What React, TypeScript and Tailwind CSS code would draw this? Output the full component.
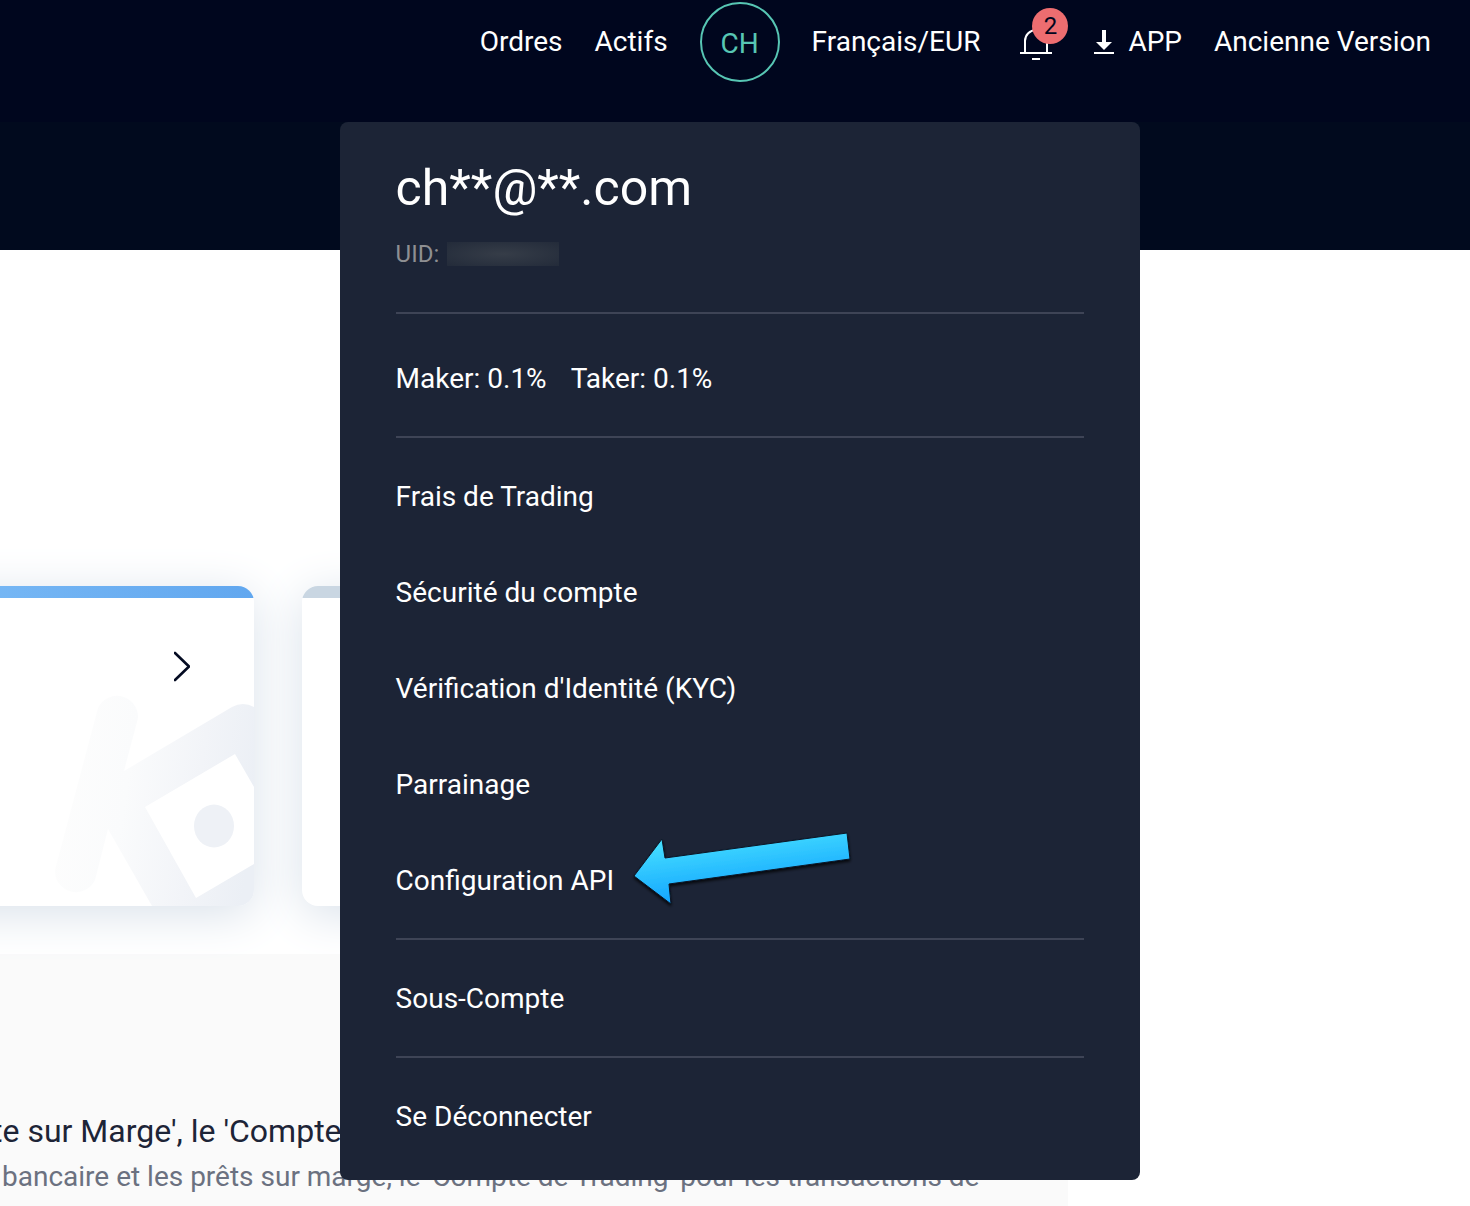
import type { ReactNode } from "react";

const accountLinks = [
  "Frais de Trading",
  "Sécurité du compte",
  "Vérification d'Identité (KYC)",
  "Parrainage",
];

function Arrow() {
  return (
    <svg
      className="pointer-events-none absolute -top-1 left-[232px] h-[84px] w-[228px]"
      viewBox="628 828 228 84"
      aria-hidden="true"
    >
      <defs>
        <linearGradient id="arrow" gradientUnits="userSpaceOnUse" x1="742" y1="835" x2="750" y2="898">
          <stop offset="0" stopColor="#43dcff" />
          <stop offset="1" stopColor="#0fa0ff" />
        </linearGradient>
        <filter id="arrowShadow" x="-10%" y="-20%" width="120%" height="150%">
          <feDropShadow dx="0" dy="2" stdDeviation="1.5" floodColor="#000" floodOpacity="0.8" />
        </filter>
      </defs>
      <path
        d="M634 876 662 839 665 858 847 833 850 859 669 884 671 904Z"
        fill="url(#arrow)"
        stroke="#0b1626"
        strokeWidth="1"
        filter="url(#arrowShadow)"
      />
    </svg>
  );
}

function WalletArt() {
  return (
    <svg
      className="absolute bottom-0 right-0 h-[308px] w-[254px]"
      viewBox="0 598 254 308"
      aria-hidden="true"
    >
      <defs>
        <linearGradient id="wallet" gradientUnits="userSpaceOnUse" x1="55" y1="790" x2="254" y2="820">
          <stop offset="0" stopColor="#fdfdfd" />
          <stop offset="0.35" stopColor="#fafbfc" />
          <stop offset="0.7" stopColor="#f2f4f8" />
          <stop offset="1" stopColor="#ebeff5" />
        </linearGradient>
      </defs>
      <path
        d="M98 708A21 21 0 0 1 138 718L124 771 232 707Q243 701 254 707V906H152L108 829 95 880A21 21 0 0 1 55 870Z"
        fill="url(#wallet)"
      />
      <path d="M145 807 235 754 254 787V864L196 898Z" fill="#fff" />
      <ellipse cx="214" cy="826" rx="20" ry="21.5" fill="#eef1f6" />
    </svg>
  );
}

function MenuItem({ label, children }: { label: string; children?: ReactNode }) {
  return (
    <li className="relative flex h-24 items-center pt-[2px]">
      <a href="#">{label}</a>
      {children}
    </li>
  );
}

function AccountMenu() {
  return (
    <div className="absolute left-1/2 top-[120px] z-10 w-[800px] -translate-x-1/2 rounded-lg bg-[#1c2436] px-14 pb-4 text-[28px] text-white">
      <div className="h-[190px] pt-9">
        <p className="text-[50px] leading-[60px]">ch**@**.com</p>
        <p className="mt-5 flex items-center gap-2 text-2xl leading-8 text-[#8e8f92]">
          UID:
          <span className="h-6 w-28 bg-radial from-[#363d48] to-[#232b3a]" />
        </p>
      </div>
      <div className="border-y-2 border-[#3e4456] pb-[10px] pt-4">
        <p className="flex h-24 items-center gap-6 pt-[2px]">
          <span>Maker: 0.1%</span>
          <span>Taker: 0.1%</span>
        </p>
      </div>
      <ul className="border-b-2 border-[#3e4456] py-[10px]">
        {accountLinks.map((label) => (
          <MenuItem key={label} label={label} />
        ))}
        <MenuItem label="Configuration API">
          <Arrow />
        </MenuItem>
      </ul>
      <ul className="border-b-2 border-[#3e4456] py-[10px]">
        <MenuItem label="Sous-Compte" />
      </ul>
      <div className="mt-[10px] flex h-24 items-center pt-[2px]">
        <button type="button">Se Déconnecter</button>
      </div>
    </div>
  );
}

function Header() {
  return (
    <header className="h-[250px] bg-[linear-gradient(#00061e_122px,#010a1e_122px)] pr-[39px] pt-[2px] text-[28px] text-white">
      <nav className="flex h-20 items-center justify-end gap-8 whitespace-nowrap">
        <a href="#">Ordres</a>
        <a href="#">Actifs</a>
        <div className="relative">
          <button
            type="button"
            className="flex size-20 items-center justify-center rounded-full border-2 border-[#57c6b4] pt-1 text-[#57c6b4]"
          >
            CH
          </button>
          <AccountMenu />
        </div>
        <button type="button">Français/EUR</button>
        <button type="button" aria-label="Notifications" className="relative ml-2 h-14 w-[42px]">
          <svg className="absolute left-0 top-3 h-10 w-8" viewBox="0 0 32 40" fill="none" stroke="#fff" strokeWidth="2" aria-hidden="true">
            <path d="M5 27V15a11 11 0 0 1 22 0v12M0 27h32M12 33h8" />
          </svg>
          <span className="absolute -top-[6px] left-3 flex size-9 items-center justify-center rounded-full bg-[#ed6d70] text-2xl text-[#00061e]">
            2
          </span>
        </button>
        <a href="#" className="flex items-center gap-[14px]">
          <svg className="h-6 w-5" viewBox="0 0 20 24" fill="#fff" aria-hidden="true">
            <path d="M8 0h4v12h6l-8 8-8-8h6zM0 22h20v2H0z" />
          </svg>
          APP
        </a>
        <a href="#">Ancienne Version</a>
      </nav>
    </header>
  );
}

export default function App() {
  return (
    <div className="flex min-h-screen flex-col overflow-hidden bg-white font-[Roboto,sans-serif]">
      <Header />
      <main className="flex flex-1 flex-col">
        <section className="flex gap-12 pb-12 pt-[336px]">
          <article className="relative -ml-[302px] h-80 w-[556px] shrink-0 rounded-2xl bg-white shadow-[0_8px_48px_#d9e1ea]">
            <div className="relative h-full overflow-hidden rounded-2xl">
              <div className="h-3 bg-linear-to-r from-[#8cc8fa] to-[#61a7ef]" />
              <WalletArt />
            </div>
            <button type="button" aria-label="Suivant" className="absolute right-16 top-16 h-8 w-4">
              <svg className="h-8 w-4" viewBox="0 0 16 32" fill="none" stroke="#040b22" strokeWidth="2.6" strokeLinecap="round" strokeLinejoin="round" aria-hidden="true">
                <path d="m1 3 14 13.500-14 13.500" />
              </svg>
            </button>
          </article>
          <article className="h-80 w-[556px] overflow-hidden rounded-2xl bg-white shadow-[0_8px_48px_#d9e1ea]">
            <div className="h-3 bg-[#c9d6e2]" />
          </article>
        </section>
        <section className="mr-[402px] flex-1 whitespace-nowrap bg-[#fafafa] pt-[154px]">
          <h2 className="-ml-2 text-[32px] leading-[46px] text-[#1d2437]">te sur Marge', le 'Compte</h2>
          <p className="pl-[2px] text-[28px] leading-[46px] text-[#6b7180]">
            bancaire et les prêts sur marge, le 'Compte de Trading' pour les transactions de
          </p>
        </section>
      </main>
    </div>
  );
}
